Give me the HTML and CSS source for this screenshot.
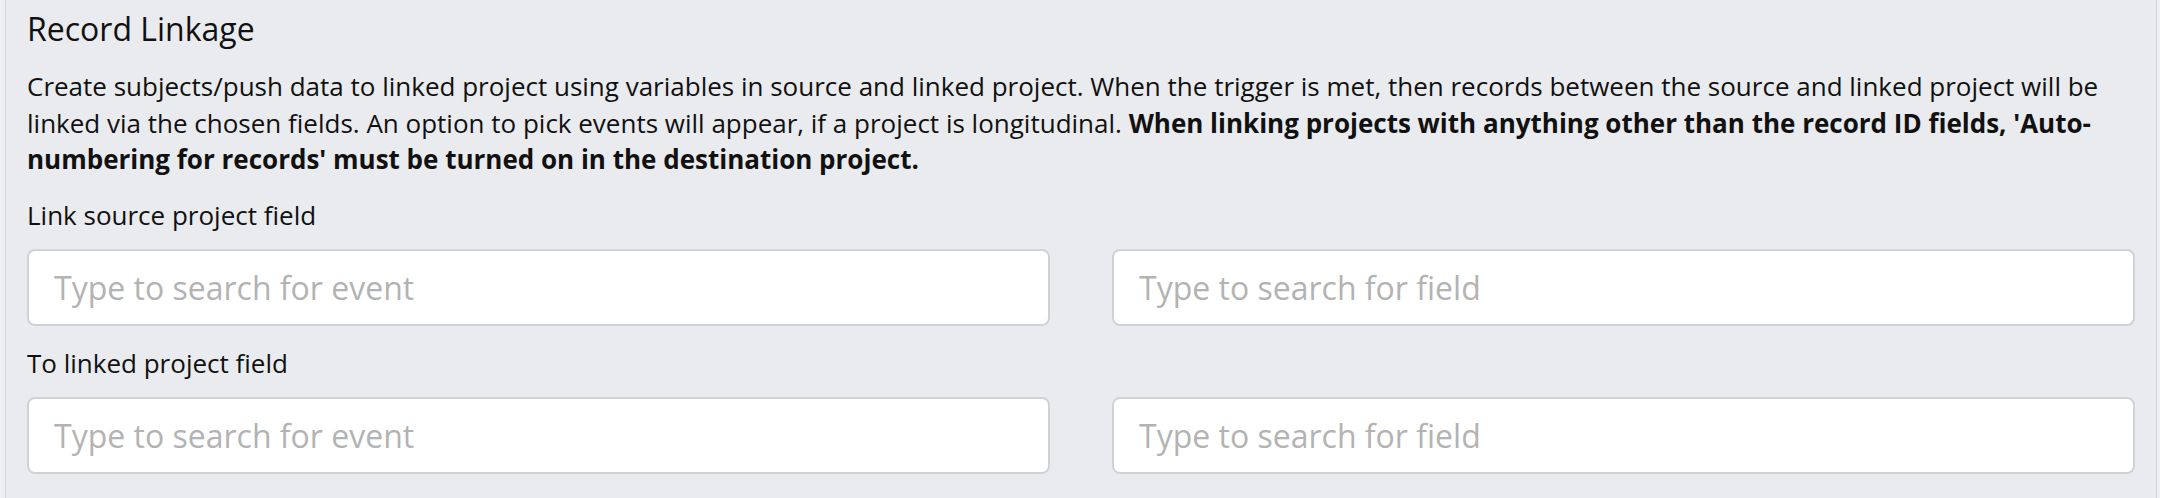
FILE: index.html
```html
<!DOCTYPE html>
<html lang="en">
<head>
<meta charset="utf-8">
<title>Record Linkage</title>
<link rel="stylesheet" href="styles.css">
</head>
<body>
<section class="panel">
  <h2 class="title">Record Linkage</h2>
  <p class="desc">Create subjects/push data to linked project using variables in source and linked project. When the trigger is met, then records between the source and linked project will be linked via the chosen fields. An option to pick events will appear, if a project is longitudinal. <strong>When linking projects with anything other than the record ID fields, 'Auto-numbering for records' must be turned on in the destination project.</strong></p>
  <div class="group">
    <div class="label">Link source project field</div>
    <div class="row">
      <input class="field" type="text" placeholder="Type to search for event">
      <input class="field" type="text" placeholder="Type to search for field">
    </div>
  </div>
  <div class="group">
    <div class="label">To linked project field</div>
    <div class="row">
      <input class="field" type="text" placeholder="Type to search for event">
      <input class="field" type="text" placeholder="Type to search for field">
    </div>
  </div>
</section>
</body>
</html>
```
FILE: styles.css
```css
html, body {
  margin: 0;
  padding: 0;
  background: #eceef1;
}
body {
  font-family: "Open Sans", "Noto Sans", sans-serif;
  color: #111;
  height: 498px;
  overflow: hidden;
}
.panel {
  margin: 0 3px 0 5px;
  border-left: 1.5px solid #d2d5da;
  border-right: 1.5px solid #d2d5da;
  background: #e9ebee;
  padding: 7px 21px 40px 21px;
  min-height: 498px;
  box-sizing: border-box;
}
.title {
  margin: 0;
  font-size: 32px;
  font-weight: 400;
  line-height: 44px;
}
.desc {
  margin: 17px 0 0 0;
  font-size: 26px;
  line-height: 36.5px;
}
.desc strong {
  font-weight: 700;
}
.group {
  margin-top: 19px;
}
.label {
  font-size: 26px;
  line-height: 36px;
}
.row {
  display: grid;
  grid-template-columns: 1fr 1fr;
  column-gap: 62px;
  margin-top: 16px;
}
.field {
  height: 77px;
  box-sizing: border-box;
  border: 2px solid #cfd3d8;
  border-radius: 8px;
  background: #fff;
  padding: 0 25px;
  font-family: "Open Sans", "Noto Sans", sans-serif;
  font-size: 32px;
  color: #333;
  outline: none;
  width: 100%;
}
.field::placeholder {
  color: #b3b3b3;
}
```
